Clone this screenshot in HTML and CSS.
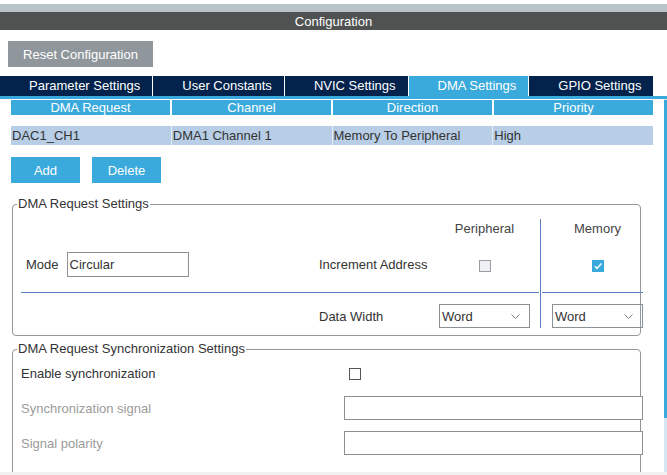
FILE: index.html
```html
<!DOCTYPE html>
<html lang="en">
<head>
<meta charset="utf-8">
<title>Configuration</title>
<link rel="stylesheet" href="styles.css">
</head>
<body>
<div class="app">
  <div class="title">Configuration</div>
  <div class="toolbar"><button class="btn-reset" type="button">Reset Configuration</button></div>
  <nav class="tabs">
    <div class="tab">Parameter Settings</div>
    <div class="tab">User Constants</div>
    <div class="tab">NVIC Settings</div>
    <div class="tab active">DMA Settings</div>
    <div class="tab">GPIO Settings</div>
  </nav>
  <div class="tabline"></div>
  <div class="panel">
    <div class="content">
      <div class="dma-table">
        <div class="row head">
          <div class="cell">DMA Request</div>
          <div class="cell">Channel</div>
          <div class="cell">Direction</div>
          <div class="cell">Priority</div>
        </div>
        <div class="row data">
          <div class="cell">DAC1_CH1</div>
          <div class="cell">DMA1 Channel 1</div>
          <div class="cell">Memory To Peripheral</div>
          <div class="cell">High</div>
        </div>
      </div>
      <div class="actions">
        <button class="btn-blue" type="button">Add</button>
        <button class="btn-blue" type="button">Delete</button>
      </div>

      <fieldset class="group">
        <legend>DMA Request Settings</legend>
        <div class="req-grid">
          <div class="colhead c-per">Peripheral</div>
          <div class="vline"></div>
          <div class="colhead c-mem">Memory</div>

          <div class="mode r2">
            <span class="lbl">Mode</span>
            <div class="textbox">Circular</div>
          </div>
          <div class="lbl c-lbl r2">Increment Address</div>
          <div class="c-per r2"><span class="chk chk-off"></span></div>
          <div class="c-mem r2"><span class="chk chk-on"><svg width="12" height="12" viewBox="0 0 12 12"><polyline points="2.8,6.2 5,8.4 9.4,3.6" fill="none" stroke="#fff" stroke-width="1.5"/></svg></span></div>

          <div class="hline hl-left"></div>
          <div class="hline hl-right"></div>

          <div class="lbl c-lbl r5">Data Width</div>
          <div class="select c-per r5"><span>Word</span><svg width="9" height="5" viewBox="0 0 9 5"><polyline points="0.5,0.5 4.5,4.5 8.5,0.5" fill="none" stroke="#7a7d80" stroke-width="1"/></svg></div>
          <div class="select c-mem r5"><span>Word</span><svg width="9" height="5" viewBox="0 0 9 5"><polyline points="0.5,0.5 4.5,4.5 8.5,0.5" fill="none" stroke="#7a7d80" stroke-width="1"/></svg></div>
        </div>
      </fieldset>

      <fieldset class="group sync">
        <legend>DMA Request Synchronization Settings</legend>
        <div class="sync-grid">
          <div class="lbl">Enable synchronization</div>
          <div><span class="chk chk-plain"></span></div>
          <div class="lbl disabled">Synchronization signal</div>
          <div class="textbox wide"></div>
          <div class="lbl disabled">Signal polarity</div>
          <div class="textbox wide"></div>
          <div class="lbl">Enable event</div>
          <div><span class="chk chk-plain"></span></div>
        </div>
      </fieldset>
    </div>
    <div class="scrollbar"><div class="thumb"></div></div>
  </div>
  <div class="statusbar"></div>
</div>
</body>
</html>
```

FILE: styles.css
```css
* { box-sizing: border-box; }

body {
  margin: 0;
  font-family: "Liberation Sans", Arial, sans-serif;
  font-size: 13px;
  color: #333;
  background: #fff;
}

.app {
  width: 667px;
  height: 475px;
  overflow: hidden;
}

.title {
  margin-top: 4px;
  border-top: 8px solid #b9c4ca;
  background: #4f5251;
  color: #fff;
  height: 26px;
  line-height: 19px;
  text-align: center;
}

.toolbar {
  padding: 11px 0 0 8px;
}

.btn-reset {
  width: 145px;
  height: 26px;
  border: none;
  background: #8f979c;
  color: #fff;
  font: inherit;
  padding: 0;
}

.tabs {
  display: flex;
  margin-top: 9px;
}

.tab {
  background: #03224c;
  color: #fff;
  height: 20px;
  line-height: 20px;
  padding: 0 12px 0 29px;
  border-right: 1px solid #fff;
  white-space: nowrap;
}

.tab:last-child { border-right: none; }

.tab.active { background: #3aaadc; }

.tabline {
  height: 3px;
  background: #3aaadc;
}

.panel {
  display: flex;
  height: 373px;
  overflow: hidden;
}

.content {
  flex: 1;
  min-width: 0;
  padding: 1px 11px 0 11px;
}

.scrollbar {
  width: 3px;
  display: flex;
  flex-direction: column;
  padding-top: 1px;
  background: #d6e7f4;
}

.thumb {
  height: 318px;
  background: #3aaadc;
}

.statusbar {
  height: 3px;
  background: #f0f0f0;
}

/* table */
.row {
  display: grid;
  grid-template-columns: repeat(4, 1fr);
}

.row.head {
  column-gap: 2px;
}

.row.head .cell {
  background: #3aaadc;
  color: #fff;
  text-align: center;
  height: 15px;
  line-height: 15px;
}

.row.data {
  margin-top: 11px;
  column-gap: 1px;
  background: #e4ecf5;
}

.row.data .cell {
  background: #b8cee6;
  color: #333;
  height: 19px;
  line-height: 19px;
  padding-left: 1px;
  white-space: nowrap;
}

.actions {
  display: flex;
  gap: 12px;
  margin-top: 12px;
}

.btn-blue {
  width: 69px;
  height: 26px;
  border: none;
  padding: 0;
  background: #3aaadc;
  color: #fff;
  font: inherit;
}

/* groups */
.group {
  margin: 14px 12px 0 1px;
  border: 1px solid #92979b;
  border-radius: 4px;
  padding: 8px 7px 7px 8px;
  min-width: 0;
}

.group legend {
  margin-left: -4px;
  padding: 0 1px;
  line-height: 14px;
  color: #333;
}

.group.sync {
  margin-top: 6px;
  padding-top: 5px;
}

.lbl { color: #333; white-space: nowrap; }
.lbl.disabled { color: #9b9b9b; }

.req-grid {
  display: grid;
  grid-template-columns: 298px 120px 91px 10px 1px 11px 91px;
  grid-template-rows: 18px 55px 1px 11px 24px;
  align-items: center;
}

.colhead { color: #444; text-align: center; grid-row: 1; }
.c-per { grid-column: 3; text-align: center; }
.c-mem { grid-column: 7; text-align: center; }
.c-lbl { grid-column: 2; }
.r2 { grid-row: 2; }
.r5 { grid-row: 5; }

.vline {
  grid-column: 5;
  grid-row: 1 / 6;
  align-self: stretch;
  background: #5b7fc2;
}

.hline {
  grid-row: 3;
  align-self: stretch;
  background: #5b7fc2;
}

.hl-left { grid-column: 1 / 5; margin-right: 1px; }
.hl-right { grid-column: 6 / 8; margin-left: 1px; }

.mode {
  grid-column: 1;
  display: flex;
  align-items: center;
  gap: 8px;
  padding-left: 5px;
}

.textbox {
  width: 122px;
  height: 25px;
  border: 1px solid #8c9196;
  line-height: 23px;
  padding-left: 2px;
  color: #333;
  background: #fff;
}

.textbox.wide {
  width: 299px;
  height: 24px;
}

.chk {
  display: inline-block;
  width: 12px;
  height: 12px;
  vertical-align: middle;
}

.chk svg { display: block; }

.chk-off {
  background: #eef0f3;
  border: 1px solid #9a9ea2;
}

.chk-on {
  background: #3aaadc;
}

.chk-plain {
  background: #fff;
  border: 1px solid #555;
  margin-left: 5px;
}

.select {
  height: 24px;
  border: 1px solid #8c9196;
  display: flex;
  align-items: center;
  justify-content: space-between;
  padding: 0 9px 0 2px;
  text-align: left;
  color: #333;
}

.select svg { display: block; }

.sync-grid {
  display: grid;
  grid-template-columns: 323px 299px;
  grid-auto-rows: 24px;
  row-gap: 11px;
  align-items: center;
}
```
